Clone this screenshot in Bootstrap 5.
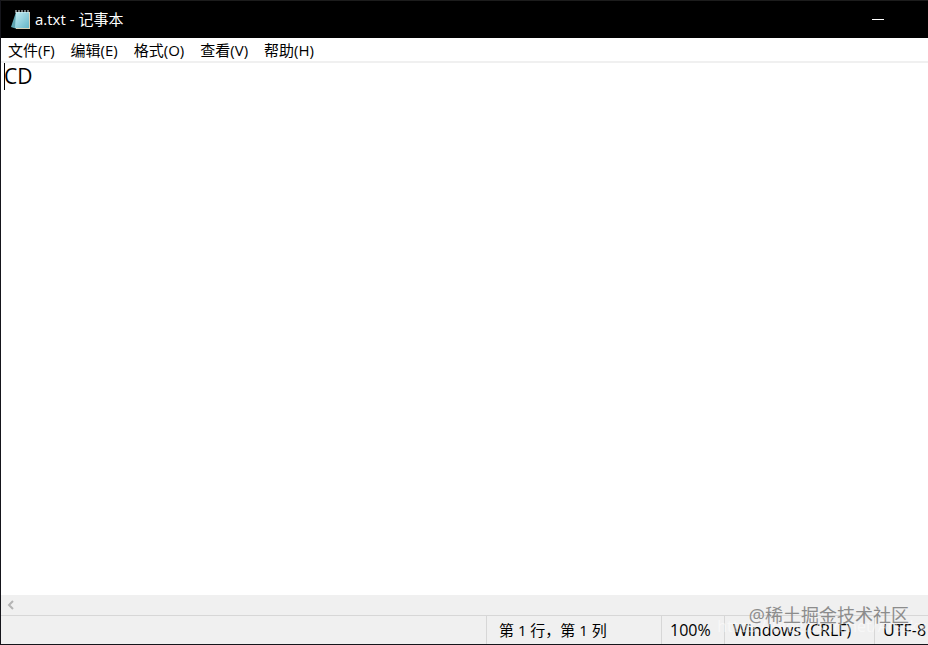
<!DOCTYPE html>
<html lang="zh-CN">
<head>
<meta charset="utf-8">
<meta name="viewport" content="width=device-width, initial-scale=1">
<title>a.txt - 记事本</title>
<link href="https://cdn.jsdelivr.net/npm/bootstrap@5.3.0/dist/css/bootstrap.min.css" rel="stylesheet">
<style>
body { font: 15px/20px "Open Sans", "Noto Sans CJK SC", sans-serif; color: #000; }
.window { border-left: 1px solid #15151b; border-bottom: 1px solid #15151b; background: #fff; }
.titlebar { height: 38px; background: #000; border-top: 1px solid #1c1c1c; color: #fff; padding-left: 9px; }
.titlebar h1 { font-size: 15px; line-height: 18px; font-weight: 400; margin-left: 3px; padding-bottom: 2px; }
.min-btn { width: 46px; margin-right: 27px; color: #fff; }
.menubar { height: 25px; border-bottom: 2px solid #f0f0f0; padding-left: 7px; gap: 16px; }
.menubar button { font-size: 15px; line-height: 24px; color: #000; }
.editor { font-size: 21px; line-height: 27px; padding: 0 3px; resize: none; outline: 0; color: #000; }
.caret { width: 1px; height: 27px; left: 3px; top: 0; background: #000; }
.hscroll { height: 20px; background: #f0f0f0; padding-left: 5px; }
.statusbar { height: 29px; background: #f0f0f0; border-top: 1px solid #d7d7d7; }
.pane { border-left: 1px solid #d7d7d7; padding-left: 8px; height: 28px; line-height: 29px; font-size: 16px; }
.pane-pos { width: 175px; padding-left: 12px; font-size: 15px; }
.pane-zoom { width: 63px; }
.pane-eol { width: 150px; }
.pane-enc { width: 54px; }
.stamp { right: 19px; bottom: 16px; font-size: 18px; line-height: 26px; color: #8c8c8c; }
.stamp-url { right: 2px; bottom: 8px; font-size: 16px; line-height: 20px; color: rgba(255,255,255,.5); }
</style>
<script src="https://cdn.jsdelivr.net/npm/bootstrap@5.3.0/dist/js/bootstrap.bundle.min.js"></script>
</head>
<body>
<div class="window vh-100 d-flex flex-column position-relative overflow-hidden">
  <header class="titlebar d-flex align-items-center flex-shrink-0">
    <svg width="22" height="22" viewBox="0 0 22 22" aria-hidden="true">
      <defs><linearGradient id="pad" x1="0" y1="0" x2="1" y2="1"><stop offset="0" stop-color="#c5edf2"/><stop offset="1" stop-color="#64b5c8"/></linearGradient></defs>
      <path d="M6 3 1 18l6 2z" fill="#5fa5b1"/>
      <path d="M6 3h14v17H6z" fill="#d9d1b8"/>
      <path d="M6 3h13v16H5z" fill="url(#pad)"/>
      <path d="M6 1v3M9 1v3M12 1v3M15 1v3M18 1v3" stroke="#e8f4f5" stroke-width="1"/>
    </svg>
    <h1 class="mb-0 flex-grow-1">a.txt - 记事本</h1>
    <button type="button" class="min-btn btn p-0 border-0 rounded-0 h-100 d-flex align-items-center justify-content-center" aria-label="最小化">
      <svg width="12" height="3" viewBox="0 0 12 3"><path d="M0 1h12v1H0z" fill="#fff"/></svg>
    </button>
  </header>
  <nav class="menubar d-flex flex-shrink-0" aria-label="菜单">
    <button type="button" class="btn p-0 border-0">文件(F)</button>
    <button type="button" class="btn p-0 border-0">编辑(E)</button>
    <button type="button" class="btn p-0 border-0">格式(O)</button>
    <button type="button" class="btn p-0 border-0">查看(V)</button>
    <button type="button" class="btn p-0 border-0">帮助(H)</button>
  </nav>
  <main class="flex-grow-1 d-flex position-relative">
    <textarea class="editor w-100 border-0" aria-label="文本编辑器" spellcheck="false">CD</textarea>
    <span class="caret position-absolute"></span>
  </main>
  <div class="hscroll d-flex align-items-center flex-shrink-0">
    <button type="button" class="btn p-0 border-0 d-flex" aria-label="向左滚动">
      <svg width="9" height="10" viewBox="0 0 9 10"><path d="M7 1 3 5l4 4" fill="none" stroke="#b4b4b4" stroke-width="2"/></svg>
    </button>
  </div>
  <footer class="statusbar d-flex justify-content-end text-nowrap flex-shrink-0">
    <div class="pane pane-pos">第 1 行，第 1 列</div>
    <div class="pane pane-zoom">100%</div>
    <div class="pane pane-eol">Windows (CRLF)</div>
    <div class="pane pane-enc">UTF-8</div>
  </footer>
  <div class="stamp-url position-absolute pe-none text-nowrap">https://blog.csdn.net/Arssky</div>
  <div class="stamp position-absolute pe-none text-nowrap">@稀土掘金技术社区</div>
</div>
</body>
</html>
